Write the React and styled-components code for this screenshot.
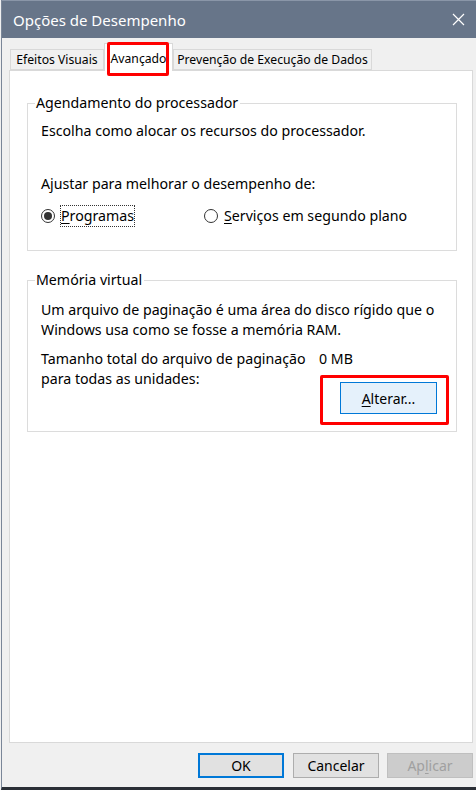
import React from "react"
import styled, { createGlobalStyle } from "styled-components"

const GlobalStyle = createGlobalStyle`
  html, body {
    margin: 0;
    padding: 0;
    background: #f0f0f0;
  }
  body {
    font-family: "Noto Sans", "Open Sans", sans-serif;
    font-size: 14.2px;
    color: #000;
  }
`

const Window = styled.div`
  position: relative;
  width: 475px;
  height: 787px;
  margin-left: 1px;
  border-left: 1px solid #7a8698;
  border-bottom: 3px solid #2b2f36;
  background: #f0f0f0;
  display: flex;
  flex-direction: column;
  box-sizing: content-box;
`

const TitleBar = styled.div`
  height: 38px;
  background: #677589;
  border-top: 1px solid #8a96a8;
  box-sizing: border-box;
  display: flex;
  align-items: center;
  justify-content: space-between;
  padding: 0 12px 0 11px;
  color: #fff;
  font-size: 15px;
`

const CloseIcon = () => (
  <svg width="13" height="13" viewBox="0 0 13 13">
    <path d="M1 1 L12 12 M12 1 L1 12" stroke="#fff" strokeWidth="1.2" fill="none" />
  </svg>
)

const Body = styled.div`
  flex: 1;
  display: flex;
  flex-direction: column;
  padding: 5px 4px 0 7px;
`

const TabRow = styled.div`
  display: flex;
  align-items: flex-end;
  height: 27px;
  padding-left: 1px;
`

const Tab = styled.div`
  width: ${(p) => p.$w}px;
  height: ${(p) => (p.$active ? "28px" : "21px")};
  margin-bottom: ${(p) => (p.$active ? "-1px" : "0")};
  box-sizing: border-box;
  padding-top: ${(p) => (p.$active ? "1px" : "0")};
  background: ${(p) => (p.$active ? "#fff" : "#f0f0f0")};
  border: 1px solid #d9d9d9;
  border-bottom: ${(p) => (p.$active ? "none" : "1px solid #d9d9d9")};
  position: relative;
  z-index: ${(p) => (p.$active ? 2 : 1)};
  display: flex;
  align-items: center;
  justify-content: center;
  font-size: 12.2px;
  white-space: nowrap;
`

const Panel = styled.div`
  height: 673px;
  box-sizing: border-box;
  background: #fff;
  border: 1px solid #d9d9d9;
  padding: 22px 15px 0 17px;
`

const Group = styled.fieldset`
  margin: 0 0 ${(p) => p.$gap || 0}px;
  padding: 0 15px ${(p) => p.$pb}px 13px;
  border: 1px solid #dcdcdc;
  min-width: 0;
`

const Legend = styled.legend`
  padding: 0 2px 0 1px;
  margin-left: -6px;
  line-height: 20px;
`

const Line = styled.div`
  line-height: 20px;
  margin-top: ${(p) => p.$mt || 0}px;
  white-space: nowrap;
`

const RadioRow = styled.div`
  display: flex;
  align-items: center;
  height: 22px;
  margin-top: 11px;
`

const RadioItem = styled.label`
  display: flex;
  align-items: center;
  width: ${(p) => p.$w || "auto"};
`

const RadioCircle = styled.span`
  width: 14px;
  height: 14px;
  box-sizing: border-box;
  border-radius: 50%;
  border: 1px solid #333;
  background: #fff;
  display: flex;
  align-items: center;
  justify-content: center;
  margin-right: 6px;
  &::after {
    content: "";
    width: 8px;
    height: 8px;
    border-radius: 50%;
    background: ${(p) => (p.$checked ? "#333" : "transparent")};
  }
`

const RadioText = styled.span`
  line-height: 20px;
  outline: ${(p) => (p.$focus ? "1px dotted #333" : "none")};
`

const U = styled.span`
  text-decoration: underline;
  text-underline-offset: 2px;
`

const SizeRow = styled.div`
  display: flex;
  margin-top: 9px;
`

const SizeLabel = styled.div`
  width: 278px;
  line-height: 20px;
  white-space: nowrap;
`

const SizeValue = styled.div`
  display: flex;
  flex-direction: column;
  align-items: flex-start;
  line-height: 20px;
`

const Button = styled.button`
  font-family: inherit;
  font-size: 14px;
  color: ${(p) => (p.$disabled ? "#a0a0a0" : "#000")};
  width: ${(p) => p.$w || 86}px;
  height: ${(p) => p.$h || 25}px;
  padding: 0;
  background: ${(p) => (p.$disabled ? "#cccccc" : p.$hot ? "#e5f1fb" : "#e1e1e1")};
  border: ${(p) =>
    p.$default
      ? "2px solid #0078d7"
      : p.$hot
      ? "1px solid #0078d7"
      : p.$disabled
      ? "1px solid #bfbfbf"
      : "1px solid #adadad"};
  box-sizing: border-box;
`

const AlterButton = styled(Button)`
  margin-top: 13px;
  margin-left: 21px;
`

const Footer = styled.div`
  display: flex;
  justify-content: flex-end;
  padding: 10px 0 0;
  gap: 9px;
  & > :first-child {
    margin-right: 0;
  }
  & > :last-child {
    margin-left: -1px;
  }
`

const Highlight = styled.div`
  position: absolute;
  box-sizing: border-box;
  border: 3px solid #ff0000;
  border-radius: 2px;
  pointer-events: none;
  z-index: 5;
`

export default function App() {
  return (
    <>
      <GlobalStyle />
      <Window>
        <TitleBar>
          <span>Opções de Desempenho</span>
          <CloseIcon />
        </TitleBar>
        <Body>
          <TabRow>
            <Tab $w={94}>Efeitos Visuais</Tab>
            <Tab $w={69} $active>Avançado</Tab>
            <Tab $w={199}>Prevenção de Execução de Dados</Tab>
          </TabRow>
          <Panel>
            <Group $pb={23} $gap={19}>
              <Legend>Agendamento do processador</Legend>
              <Line $mt={8}>Escolha como alocar os recursos do processador.</Line>
              <Line $mt={33}>Ajustar para melhorar o desempenho de:</Line>
              <RadioRow>
                <RadioItem $w="163px">
                  <RadioCircle $checked />
                  <RadioText $focus>
                    <U>P</U>rogramas
                  </RadioText>
                </RadioItem>
                <RadioItem>
                  <RadioCircle />
                  <RadioText>
                    <U>S</U>erviços em segundo plano
                  </RadioText>
                </RadioItem>
              </RadioRow>
            </Group>
            <Group $pb={17}>
              <Legend>Memória virtual</Legend>
              <Line $mt={10}>
                Um arquivo de paginação é uma área do disco rígido que o
              </Line>
              <Line>Windows usa como se fosse a memória RAM.</Line>
              <SizeRow>
                <SizeLabel>
                  Tamanho total do arquivo de paginação
                  <br />
                  para todas as unidades:
                </SizeLabel>
                <SizeValue>
                  <span>0 MB</span>
                  <AlterButton $hot $w={97} $h={32}>
                    <U>A</U>lterar...
                  </AlterButton>
                </SizeValue>
              </SizeRow>
            </Group>
          </Panel>
          <Footer>
            <Button $default>OK</Button>
            <Button>Cancelar</Button>
            <Button $disabled>
              Ap<U>l</U>icar
            </Button>
          </Footer>
        </Body>
        <Highlight style={{ left: 105, top: 42, width: 62, height: 34 }} />
        <Highlight style={{ left: 318, top: 375, width: 129, height: 50 }} />
      </Window>
    </>
  )
}
